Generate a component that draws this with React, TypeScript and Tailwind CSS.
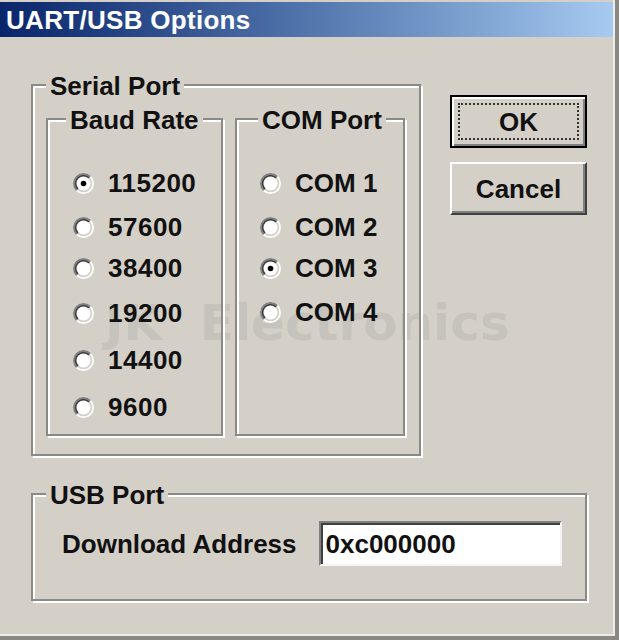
import React from 'react';

const font = { fontFamily: '"Liberation Sans", Arial, sans-serif' };

const bauds = [
  { label: '115200', checked: true, gap: '' },
  { label: '57600', checked: false, gap: 'mt-[4px]' },
  { label: '38400', checked: false, gap: 'mt-[1px]' },
  { label: '19200', checked: false, gap: 'mt-[5px]' },
  { label: '14400', checked: false, gap: 'mt-[7px]' },
  { label: '9600', checked: false, gap: 'mt-[7px]' },
];

const ports = [
  { label: 'COM 1', checked: false, gap: '' },
  { label: 'COM 2', checked: false, gap: 'mt-[4px]' },
  { label: 'COM 3', checked: true, gap: 'mt-[1px]' },
  { label: 'COM 4', checked: false, gap: 'mt-[4px]' },
];

// classic sunken win9x radio, drawn on a 12px grid
function Radio({ checked }: { checked: boolean }) {
  return (
    <svg width="21" height="21" viewBox="0 0 12 12" className="shrink-0">
      <circle cx="6" cy="6" r="6" fill="#ffffff" />
      <path d="M1.757 10.243 A6 6 0 0 1 10.243 1.757 Z" fill="#808080" />
      <circle cx="6" cy="6" r="5" fill="#d4d0c8" />
      <path d="M2.464 9.536 A5 5 0 0 1 9.536 2.464 Z" fill="#404040" />
      <circle cx="6" cy="6" r="4" fill="#ffffff" />
      {checked && <circle cx="6" cy="6" r="1.6" fill="#000000" />}
    </svg>
  );
}

function GroupLabel({ text, left }: { text: string; left: string }) {
  return (
    <span className={`absolute -top-[13px] ${left} bg-[#d4d0c8] px-1 text-[26px] leading-none font-bold text-[#111]`}>
      {text}
    </span>
  );
}

const etched = 'relative border-2 border-[#8c8a85] shadow-[inset_2px_2px_0_#ffffff,2px_2px_0_#ffffff]';

export default function App() {
  return (
    <div
      style={font}
      className="relative w-[619px] h-[640px] bg-[#d4d0c8] pt-[2px] border-r-4 border-b-4 border-[#8a8883] shadow-[inset_-2px_-2px_0_#eeece8] overflow-hidden"
    >
      {/* watermark, sits behind the controls */}
      <div
        className="pointer-events-none absolute left-[105px] top-[298px] text-[50px] leading-none font-bold text-[#c6c3bc] [word-spacing:20px]"
        style={{ fontFamily: '"DejaVu Sans", sans-serif' }}
      >
        JK Electronics
      </div>

      {/* title bar */}
      <div className="relative h-[35px] mr-[2px] bg-gradient-to-r from-[#0a246a] to-[#a6caf0] flex items-center pl-[6px]">
        <span className="text-white text-[26px] leading-none font-bold tracking-[0.3px]">UART/USB Options</span>
      </div>

      <div className="pl-[31px] pr-[28px]">
        <div className="flex gap-[29px] mt-[47px]">
          {/* Serial Port */}
          <div className={`${etched} w-[390px] pt-[32px] pl-[13px] pr-[14px] pb-[18px] flex gap-[12px]`}>
            <GroupLabel text="Serial Port" left="left-[13px]" />

            <div className={`${etched} w-[177px] h-[318px] pt-[43px] pl-[25px] flex flex-col`}>
              <GroupLabel text="Baud Rate" left="left-[18px]" />
              {bauds.map((b) => (
                <label key={b.label} className={`${b.gap} h-[40px] flex items-center gap-[14px]`}>
                  <Radio checked={b.checked} />
                  <span className="text-[26px] leading-none font-bold text-[#111] tracking-[0.5px]">{b.label}</span>
                </label>
              ))}
            </div>

            <div className={`${etched} w-[170px] h-[318px] pt-[43px] pl-[23px] flex flex-col`}>
              <GroupLabel text="COM Port" left="left-[21px]" />
              {ports.map((p) => (
                <label key={p.label} className={`${p.gap} h-[40px] flex items-center gap-[14px]`}>
                  <Radio checked={p.checked} />
                  <span className="text-[26px] leading-none font-bold text-[#111]">{p.label}</span>
                </label>
              ))}
            </div>
          </div>

          {/* buttons */}
          <div className="relative flex flex-col gap-[14px] pt-[11px]">
            <button className="w-[137px] h-[53px] border-2 border-black shadow-[inset_2px_2px_0_#ffffff,inset_-2px_-2px_0_#808080] p-[6px] flex">
              <span className="flex-1 border-2 border-dotted border-[#333] flex items-center justify-center text-[26px] leading-none font-bold text-[#111]">
                OK
              </span>
            </button>
            <button className="w-[137px] h-[53px] border-2 border-t-white border-l-white border-r-[#404040] border-b-[#404040] shadow-[inset_-2px_-2px_0_#808080] flex items-center justify-center text-[26px] leading-none font-bold text-[#111]">
              Cancel
            </button>
          </div>
        </div>

        {/* USB Port */}
        <div className={`${etched} mt-[37px] h-[108px] pl-[29px] pt-[26px] flex items-start`}>
          <GroupLabel text="USB Port" left="left-[13px]" />
          <span className="h-[45px] flex items-center text-[26px] leading-none font-bold text-[#111]">Download Address</span>
          <div className="ml-[22px] w-[243px] h-[45px] bg-white border-2 border-t-[#808080] border-l-[#808080] border-r-[#f4f4f4] border-b-[#f4f4f4] shadow-[inset_2px_2px_0_#404040] flex items-center pl-[5px]">
            <span className="text-[26px] leading-none font-bold text-[#111]">0xc000000</span>
          </div>
        </div>
      </div>
    </div>
  );
}
